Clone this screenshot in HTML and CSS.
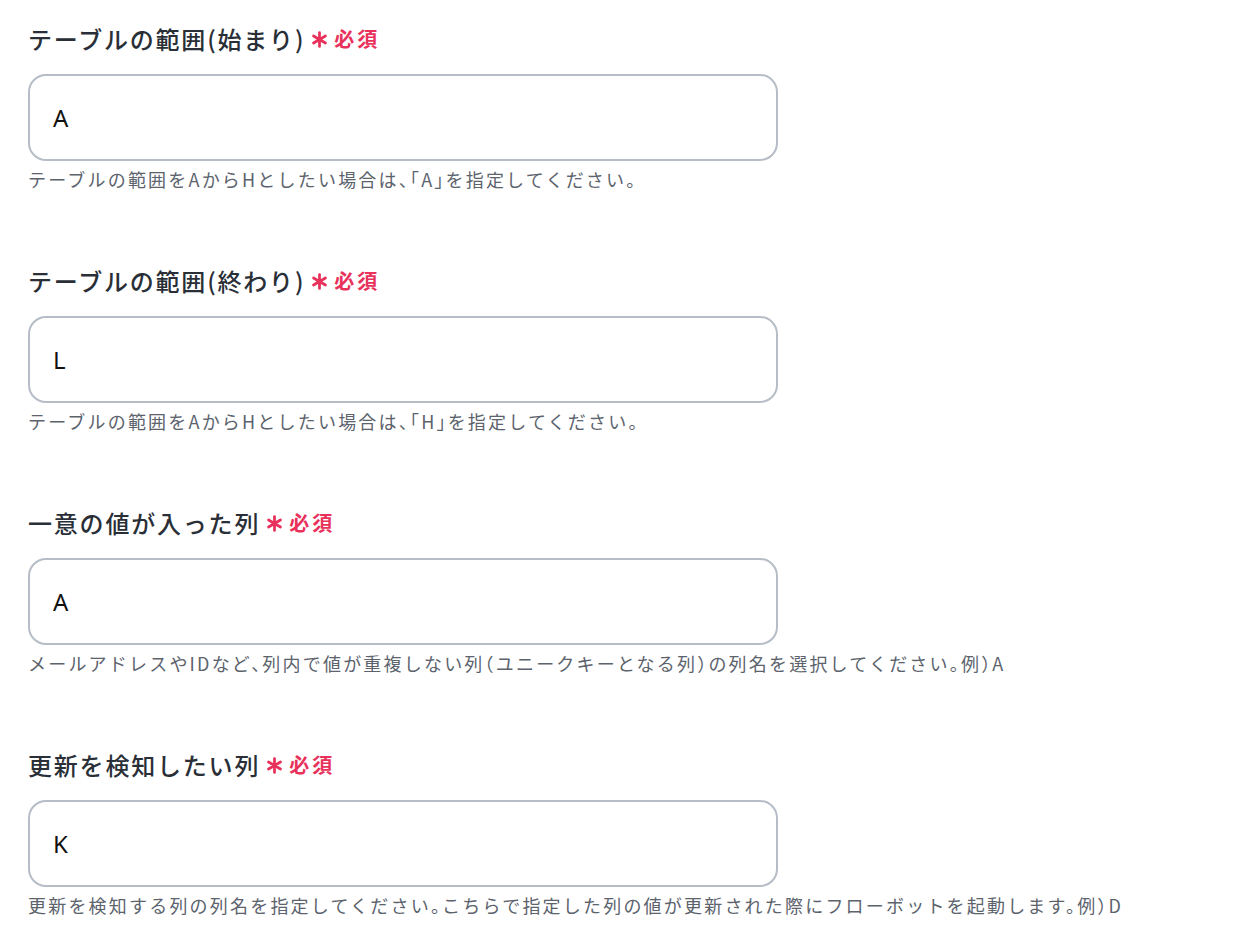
FILE: index.html
```html
<!DOCTYPE html>
<html lang="ja">
<head>
<meta charset="utf-8">
<link rel="stylesheet" href="styles.css">
</head>
<body>
<div class="form">
  <div class="field">
    <div class="label">テーブルの範囲(始まり)<span class="req"><svg class="ast" viewBox="0 0 16 16"><path d="M8 1.5v13M2.4 4.75l11.2 6.5M2.4 11.25l11.2-6.5"/></svg>必須</span></div>
    <div class="input">A</div>
    <div class="help">テーブルの範囲をAからHとしたい場合は、「A」を指定してください。</div>
  </div>
  <div class="field">
    <div class="label">テーブルの範囲(終わり)<span class="req"><svg class="ast" viewBox="0 0 16 16"><path d="M8 1.5v13M2.4 4.75l11.2 6.5M2.4 11.25l11.2-6.5"/></svg>必須</span></div>
    <div class="input">L</div>
    <div class="help">テーブルの範囲をAからHとしたい場合は、「H」を指定してください。</div>
  </div>
  <div class="field">
    <div class="label">一意の値が入った列<span class="req"><svg class="ast" viewBox="0 0 16 16"><path d="M8 1.5v13M2.4 4.75l11.2 6.5M2.4 11.25l11.2-6.5"/></svg>必須</span></div>
    <div class="input">A</div>
    <div class="help">メールアドレスやIDなど、列内で値が重複しない列（ユニークキーとなる列）の列名を選択してください。例）A</div>
  </div>
  <div class="field">
    <div class="label">更新を検知したい列<span class="req"><svg class="ast" viewBox="0 0 16 16"><path d="M8 1.5v13M2.4 4.75l11.2 6.5M2.4 11.25l11.2-6.5"/></svg>必須</span></div>
    <div class="input">K</div>
    <div class="help">更新を検知する列の列名を指定してください。こちらで指定した列の値が更新された際にフローボットを起動します。例）D</div>
  </div>
</div>
</body>
</html>
```
FILE: styles.css
```css
html, body {
  margin: 0;
  padding: 0;
  background: #ffffff;
}
body {
  font-family: "Noto Sans CJK JP", "Noto Sans", sans-serif;
  color: #2a2f37;
}
.form {
  padding: 22px 28px 0 28px;
  display: flex;
  flex-direction: column;
  gap: 72px;
}
.field {
  display: flex;
  flex-direction: column;
  width: 750px;
}
.label {
  font-size: 24px;
  font-weight: 500;
  letter-spacing: 1.8px;
  line-height: 34px;
  display: flex;
  align-items: center;
  white-space: nowrap;
}
.req {
  color: #e8315b;
  font-size: 20px;
  font-weight: 700;
  letter-spacing: 3px;
  margin-left: 6px;
  display: inline-flex;
  align-items: center;
}
.ast {
  width: 17px;
  height: 17px;
  margin-right: 6px;
  fill: none;
  stroke: #e8315b;
  stroke-width: 2.6;
  stroke-linecap: round;
}
.input {
  margin-top: 18px;
  box-sizing: border-box;
  height: 87px;
  border: 2px solid #b6bdc7;
  border-radius: 18px;
  padding: 0 23px;
  display: flex;
  align-items: center;
  font-family: "Noto Sans", "Noto Sans CJK JP", sans-serif;
  font-size: 24px;
  color: #111111;
}
.help {
  margin-top: 5px;
  font-size: 18px;
  line-height: 26px;
  letter-spacing: 2.2px;
  font-feature-settings: "halt";
  color: #5c636d;
  white-space: nowrap;
}
```
